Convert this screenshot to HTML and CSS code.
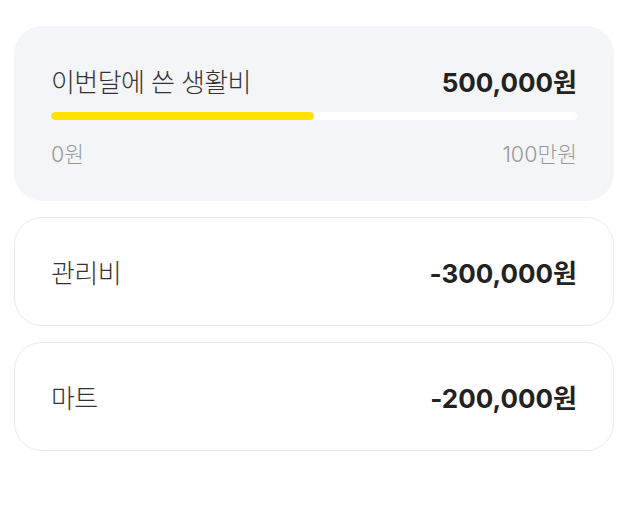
FILE: index.html
```html
<!DOCTYPE html>
<html lang="ko">
<head>
<meta charset="utf-8">
<link rel="stylesheet" href="styles.css">
</head>
<body>
<div class="list">
  <section class="summary">
    <div class="row">
      <span class="label">이번달에 쓴 생활비</span>
      <span class="amount">500,000원</span>
    </div>
    <div class="track"><div class="fill" style="width: 50%"></div></div>
    <div class="row scale">
      <span>0원</span>
      <span>100만원</span>
    </div>
  </section>
  <section class="item">
    <span class="label">관리비</span>
    <span class="amount">-300,000원</span>
  </section>
  <section class="item">
    <span class="label">마트</span>
    <span class="amount">-200,000원</span>
  </section>
</div>
</body>
</html>
```
FILE: styles.css
```css
html, body {
  margin: 0;
  padding: 0;
  background: #ffffff;
}
body {
  font-family: Inter, "Noto Sans CJK KR", sans-serif;
  color: #333;
}
.list {
  display: flex;
  flex-direction: column;
  gap: 16px;
  width: 600px;
  padding: 26px 0 0 14px;
}
.summary {
  background: #f4f5f7;
  border-radius: 28px;
  padding: 38px 37px 37px;
}
.row {
  display: flex;
  justify-content: space-between;
  align-items: center;
  height: 32px;
}
.label {
  font-family: "Noto Sans CJK KR", sans-serif;
  font-size: 26px;
  font-weight: 300;
  color: #333;
  letter-spacing: -0.6px;
}
.amount {
  font-family: Inter, "Noto Sans CJK KR", sans-serif;
  font-size: 26px;
  font-weight: 700;
  color: #222;
}
.track {
  margin-top: 16px;
  height: 8px;
  background: #ffffff;
  border-radius: 4px;
  overflow: hidden;
}
.fill {
  height: 100%;
  background: #ffe200;
  border-radius: 4px;
}
.scale {
  margin-top: 20px;
  height: 24px;
  font-size: 21.5px;
  color: #999999;
}
.scale span {
  font-family: Inter, "Noto Sans CJK KR", sans-serif;
  font-weight: 300;
}
.item {
  box-sizing: border-box;
  height: 109px;
  border: 1px solid #e9e9ec;
  border-radius: 28px;
  padding: 0 36px;
  display: flex;
  justify-content: space-between;
  align-items: center;
}
```
